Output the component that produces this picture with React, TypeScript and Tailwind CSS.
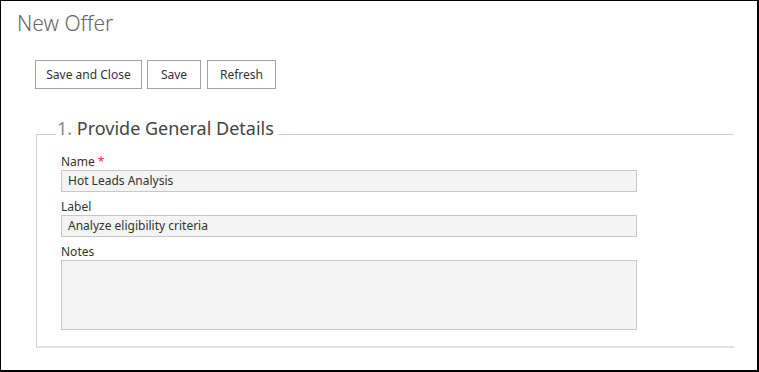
const font = { fontFamily: '"Segoe UI", "Noto Sans", "Open Sans", sans-serif' };

function Field({ label, required, value }: { label: string; required?: boolean; value: string }) {
  return (
    <div className="flex flex-col">
      <label className="h-[16px] text-[12px] leading-[16px] text-[#333]">
        {label}
        {required && <span className="ml-[3px] leading-none text-[#e0323c]">*</span>}
      </label>
      <div className="w-[576px] h-[22px] border border-[#c8c8c8] bg-[#f4f4f4] px-[6px] flex items-center text-[12px] text-[#333]">
        {value}
      </div>
    </div>
  );
}

export default function App() {
  return (
    <div
      style={font}
      className="w-[759px] h-[372px] bg-white border-l border-t border-r-2 border-b-2 border-black flex flex-col"
    >
      <h1 className="pl-[16px] pt-[9px] text-[21px] leading-[26px] font-light text-[#666]">New Offer</h1>

      <div className="flex gap-[5px] pl-[34px] mt-[24px]">
        <button className="w-[107px] h-[29px] border border-[#a3a3a3] bg-white text-[12px] text-[#333]">
          Save and Close
        </button>
        <button className="w-[54px] h-[29px] border border-[#a3a3a3] bg-white text-[12px] text-[#333]">
          Save
        </button>
        <button className="w-[69px] h-[29px] border border-[#a3a3a3] bg-white text-[12px] text-[#333] ml-[1px]">
          Refresh
        </button>
      </div>

      <div className="ml-[35px] w-[698px] mt-[28px]">
        <div className="flex items-end">
          <div className="w-[20px] border-t border-[#cfcfcf] mb-[4px]" />
          <div className="px-[1px] text-[18px] leading-[22px] text-[#444]">
            <span className="text-[#8a8a8a]">1.</span> Provide General Details
          </div>
          <div className="flex-1 ml-[3px] border-t border-[#cfcfcf] mb-[4px]" />
        </div>
        <div className="border-l border-[#d2d2d2] border-b-2 border-b-[#e2e2e2] pl-[24px] pt-[19px] pb-[16px] flex flex-col gap-[7px] -mt-[4px]">
          <Field label="Name" required value="Hot Leads Analysis" />
          <Field label="Label" value="Analyze eligibility criteria" />
          <div className="flex flex-col">
            <label className="h-[16px] text-[12px] leading-[16px] text-[#333]">Notes</label>
            <textarea className="w-[576px] h-[70px] border border-[#c8c8c8] bg-[#f4f4f4] resize-none outline-none" />
          </div>
        </div>
      </div>
    </div>
  );
}
